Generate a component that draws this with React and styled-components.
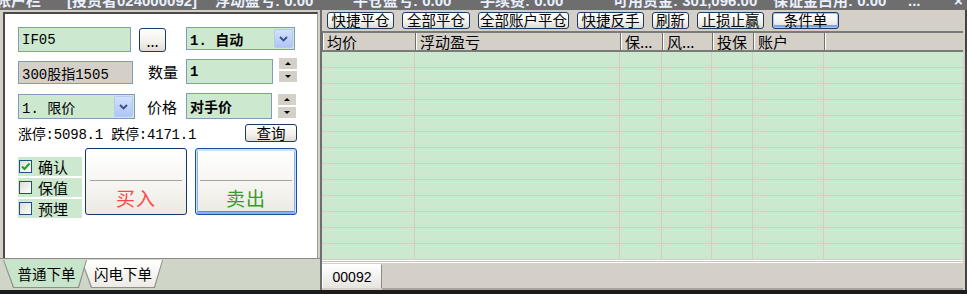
import styled, { createGlobalStyle } from 'styled-components';

const MONO = `"Liberation Mono", "Noto Sans CJK SC", monospace`;

const GlobalStyle = createGlobalStyle`
  html, body { margin: 0; padding: 0; }
  body { background: #d4d0c8; font-family: ${MONO}; }
  * { box-sizing: border-box; }
`;

// 外框
const Window = styled.div`
  width: 967px;
  height: 294px;
  overflow: hidden;
  display: flex;
  flex-direction: column;
  background: #d4d0c8;
`;

// 顶部账户栏（只露出下半截）
const TitleBar = styled.div`
  height: 10px;
  flex: none;
  overflow: hidden;
  display: flex;
  align-items: flex-start;
  background: #6e6e6e;
  color: #e9f0ff;
  font-family: "Liberation Sans", "Noto Sans CJK SC", sans-serif;
  font-weight: bold;
  font-size: 15px;
  line-height: 16px;
  white-space: pre;
`;

const TitleItem = styled.span`
  flex: none;
  margin-top: -7px;
  width: ${(p) => (p.$w ? `${p.$w}px` : 'auto')};
  margin-left: ${(p) => p.$ml || 0}px;
  overflow: hidden;
`;

const Body = styled.div`
  flex: none;
  height: 280px;
  display: flex;
`;

const BottomStrip = styled.div`
  flex: 1;
  background: #1c1c1c;
`;

/* ---------- 左侧下单面板 ---------- */

const LeftPane = styled.div`
  width: 320px;
  flex: none;
  display: flex;
  flex-direction: column;
  padding-top: 2px;
`;

const FormPanel = styled.div`
  margin-left: 3px;
  width: 315px;
  height: 246px;
  background: #fff;
  border-top: 2px solid #4a4a4a;
  border-left: 2px solid #4a4a4a;
  border-right: 1px solid #9a9a9a;
  padding: 13px 0 0 13px;
`;

const Row = styled.div`
  display: flex;
  align-items: flex-start;
  margin-top: ${(p) => p.$mt || 0}px;
`;

const Field = styled.div`
  width: ${(p) => p.$w}px;
  height: ${(p) => p.$h}px;
  margin-top: ${(p) => p.$mt || 0}px;
  margin-left: ${(p) => p.$ml || 0}px;
  flex: none;
  display: flex;
  align-items: center;
  padding-left: 3px;
  background: ${(p) => (p.$gray ? '#d4d0c8' : '#cce8cf')};
  border: 1px solid #7f9db9;
  font-size: 14px;
  font-weight: ${(p) => (p.$bold ? 'bold' : 'normal')};
  color: #000;
  white-space: pre;
  position: relative;
`;

const ArrowBox = styled.span`
  position: absolute;
  right: 1px;
  top: 1px;
  bottom: 1px;
  width: 19px;
  border: 1px solid #b6c9f3;
  border-radius: 2px;
  background: linear-gradient(#d2e0fd, #aec5f6);
  display: flex;
  align-items: center;
  justify-content: center;
`;

const Label = styled.div`
  width: ${(p) => p.$w}px;
  padding-left: ${(p) => p.$pl}px;
  height: ${(p) => p.$h}px;
  flex: none;
  display: flex;
  align-items: center;
  font-size: 15px;
  font-family: "Noto Sans CJK SC", sans-serif;
`;

const XpButton = styled.button`
  flex: none;
  width: ${(p) => p.$w}px;
  height: ${(p) => p.$h}px;
  margin-left: ${(p) => p.$ml || 0}px;
  margin-top: ${(p) => p.$mt || 0}px;
  padding: 0;
  border: 1px solid #1d3b62;
  border-radius: 3px;
  background: linear-gradient(#ffffff, #f3f2ed 55%, #dedcd3);
  box-shadow: ${(p) => (p.$default ? 'inset 0 0 0 1px #a8c6f7, inset 0 -2px 0 1px #7ea4ee' : 'none')};
  font-family: "Noto Sans CJK SC", sans-serif;
  font-size: 14.5px;
  line-height: 1;
  white-space: nowrap;
  color: #000;
  display: flex;
  align-items: ${(p) => (p.$low ? 'flex-end' : 'center')};
  padding-bottom: ${(p) => (p.$low ? 3 : 0)}px;
  justify-content: center;
  cursor: pointer;
`;

const Spinner = styled.div`
  margin-left: 6px;
  margin-top: ${(p) => p.$mt || 0}px;
  width: 18px;
  display: flex;
  flex-direction: column;
  gap: 2px;
`;

const SpinBtn = styled.div`
  height: 11px;
  background: #d4d0c8;
  display: flex;
  align-items: center;
  justify-content: center;

  &::after {
    content: '';
    border-left: 3px solid transparent;
    border-right: 3px solid transparent;
    ${(p) => (p.$down ? 'border-top: 3px solid #000;' : 'border-bottom: 3px solid #000;')}
  }
`;

const LimitText = styled.div`
  width: 227px;
  height: 18px;
  margin-top: 1px;
  display: flex;
  align-items: center;
  font-size: 14px;
  letter-spacing: -0.2px;
  white-space: pre;
`;

const Checks = styled.div`
  width: 64px;
  margin-top: 9px;
  display: flex;
  flex-direction: column;
  gap: 2px;
`;

const CheckRow = styled.div`
  height: 19px;
  background: #cce8cf;
  display: flex;
  align-items: center;
  gap: 6px;
  padding-left: 1px;
  font-family: "Noto Sans CJK SC", sans-serif;
  font-size: 15px;
`;

const Box = styled.span`
  width: 13px;
  height: 13px;
  border: 1px solid #1c5180;
  background: linear-gradient(135deg, #dcdcd6, #ffffff);
  display: flex;
  align-items: center;
  justify-content: center;
`;

const TradeButton = styled.div`
  flex: none;
  width: 102px;
  height: 67px;
  margin-left: ${(p) => p.$ml}px;
  border: 1px solid ${(p) => (p.$focus ? '#1d4f9a' : '#0e3a72')};
  border-radius: 3px;
  background: linear-gradient(#ffffff, #f5f4f0 60%, #ebe9e2);
  box-shadow: ${(p) =>
    p.$focus ? 'inset 0 1px 0 1px #cfe0fc, inset 0 0 0 2px #8db0f3, inset 0 -2px 0 1px #5f8ae8' : 'none'};
  display: flex;
  flex-direction: column;
  padding: 0 4px;
`;

const TradeTop = styled.div`
  height: 32px;
  border-bottom: 1px solid #a3a3a0;
`;

const TradeText = styled.div`
  flex: 1;
  display: flex;
  align-items: center;
  justify-content: center;
  font-family: "Noto Sans CJK SC", sans-serif;
  font-size: 19px;
  letter-spacing: 1px;
  color: ${(p) => p.$color};
`;

const TabStrip = styled.div`
  flex: 1;
  background: #cfd6c7;
  border-top: 1px solid #8a8a8a;
  display: flex;
  align-items: flex-start;
  padding-left: 3px;
`;

const SlantTab = styled.div`
  flex: none;
  width: ${(p) => p.$w}px;
  height: 28px;
  margin-top: 1px;
  margin-left: ${(p) => p.$ml || 0}px;
  position: relative;
  z-index: ${(p) => (p.$active ? 2 : 1)};
  background: #8f8f8f;
  clip-path: polygon(0 0, 100% 0, calc(100% - 8px) 100%, 10px 100%);
  padding: 0 1px 1px 1px;
`;

const SlantFace = styled.div`
  height: 100%;
  background: ${(p) => (p.$active ? '#c6e5ca' : 'linear-gradient(#ffffff, #ecebe4)')};
  clip-path: polygon(0 0, 100% 0, calc(100% - 8px) 100%, 10px 100%);
  display: flex;
  align-items: center;
  justify-content: center;
  padding-left: ${(p) => (p.$active ? 3 : 2)}px;
  font-family: "Noto Sans CJK SC", sans-serif;
  font-size: 14.5px;
  white-space: nowrap;
`;

/* ---------- 右侧持仓列表 ---------- */

const RightPane = styled.div`
  flex: 1;
  display: flex;
  flex-direction: column;
  border-left: 2px solid #6e6e6e;
  border-right: 2px solid #444;
  padding-right: 2px;
`;

const Toolbar = styled.div`
  height: 21px;
  flex: none;
  display: flex;
  gap: 8px;
  padding: 1px 0 0 5px;
`;

const Grid = styled.div`
  flex: none;
  background: #cce8cf;
  border-top: 2px solid #7a7a7a;
`;

const HeaderRow = styled.div`
  display: flex;
  height: 19px;
  background: #d4d0c8;
  border-bottom: 2px solid #7a7a7a;
`;

const HeaderCell = styled.div`
  width: ${(p) => (p.$w ? `${p.$w}px` : 'auto')};
  flex: ${(p) => (p.$w ? 'none' : 1)};
  border-left: ${(p) => (p.$w || p.$edge ? '1px solid #6e6e6e' : 'none')};
  box-shadow: inset 1px 0 0 #ffffff;
  padding-left: 4px;
  font-family: "Noto Sans CJK SC", sans-serif;
  font-size: 15px;
  line-height: 17px;
  white-space: nowrap;
  overflow: hidden;
`;

const DataRow = styled.div`
  display: flex;
  height: 16px;
  border-bottom: 1px solid #d6ccc3;
`;

const DataCell = styled.div`
  width: ${(p) => (p.$w ? `${p.$w}px` : 'auto')};
  flex: ${(p) => (p.$w ? 'none' : 1)};
  border-right: ${(p) => (p.$w ? '1px solid #d6ccc3' : 'none')};
`;

const Groove = styled.div`
  height: 3px;
  flex: none;
  background: linear-gradient(#ffffff 0 1px, #c9c5bd 1px 2px, #ffffff 2px 3px);
`;

const BottomTabs = styled.div`
  flex: 1;
  display: flex;
  align-items: flex-start;
`;

const PageTab = styled.div`
  flex: none;
  width: 60px;
  height: 24px;
  margin-top: 1px;
  border-left: 1px solid #ffffff;
  border-top: 1px solid #ffffff;
  border-right: 1px solid #8c8a84;
  background: linear-gradient(#ffffff, #e6e4de);
  display: flex;
  align-items: center;
  justify-content: center;
  padding-top: 1px;
  font-family: "Liberation Sans", sans-serif;
  font-size: 14px;
`;

const TabFill = styled.div`
  flex: 1;
  height: 27px;
  border-bottom: 2px solid #a8a49c;
`;

const columns = [
  { title: '均价', w: 93 },
  { title: '浮动盈亏', w: 205 },
  { title: '保...', w: 42 },
  { title: '风...', w: 50 },
  { title: '投保', w: 41 },
  { title: '账户', w: 71 },
  { title: '' },
];

const toolButtons = [
  { text: '快捷平仓', w: 67 },
  { text: '全部平仓', w: 68 },
  { text: '全部账户平仓', w: 91 },
  { text: '快捷反手', w: 67 },
  { text: '刷新', w: 37 },
  { text: '止损止赢', w: 67 },
  { text: '条件单', w: 67, def: true },
];

const Chevron = () => (
  <svg width="9" height="6" viewBox="0 0 9 6">
    <path d="M1 1 L4.5 4.5 L8 1" fill="none" stroke="#3b4f82" strokeWidth="1.8" />
  </svg>
);

const Tick = () => (
  <svg width="11" height="11" viewBox="0 0 11 11">
    <path d="M2 5.5 L4.5 8 L9.5 2.5" fill="none" stroke="#21a121" strokeWidth="2" />
  </svg>
);

function App() {
  return (
    <Window>
      <GlobalStyle />
      <TitleBar>
        <TitleItem $ml={-4} $w={71}>帐户栏</TitleItem>
        <TitleItem $w={148}>[投资者024000092]</TitleItem>
        <TitleItem $w={138}>浮动盈亏: 0.00</TitleItem>
        <TitleItem $w={127}>平仓盈亏: 0.00</TitleItem>
        <TitleItem $w={133}>手续费: 0.00</TitleItem>
        <TitleItem $w={160}>可用资金: 301,096.00</TitleItem>
        <TitleItem $w={135}>保证金占用: 0.00</TitleItem>
        <TitleItem $w={46}>...</TitleItem>
        <TitleItem>×</TitleItem>
      </TitleBar>

      <Body>
        <LeftPane>
          <FormPanel>
            <Row>
              <Field $w={113} $h={25}>IF05</Field>
              <XpButton $w={27} $h={24} $ml={8} $mt={1} $low>...</XpButton>
              <Field $w={109} $h={23} $ml={20} $bold>
                1. 自动
                <ArrowBox><Chevron /></ArrowBox>
              </Field>
            </Row>
            <Row $mt={6}>
              <Field $w={115} $h={23} $mt={3} $gray>300股指1505</Field>
              <Label $w={53} $pl={15} $h={27}>数量</Label>
              <Field $w={87} $h={25} $mt={1} $bold>1</Field>
              <Spinner>
                <SpinBtn />
                <SpinBtn $down />
              </Spinner>
            </Row>
            <Row $mt={8}>
              <Field $w={117} $h={25} $mt={1}>
                1. 限价
                <ArrowBox><Chevron /></ArrowBox>
              </Field>
              <Label $w={51} $pl={12} $h={27}>价格</Label>
              <Field $w={86} $h={26} $bold>对手价</Field>
              <Spinner $mt={1}>
                <SpinBtn />
                <SpinBtn $down />
              </Spinner>
            </Row>
            <Row $mt={3}>
              <LimitText>涨停:5098.1 跌停:4171.1</LimitText>
              <XpButton $w={52} $h={18} $mt={1}>查询</XpButton>
            </Row>
            <Row $mt={6}>
              <Checks>
                <CheckRow><Box><Tick /></Box>确认</CheckRow>
                <CheckRow><Box />保值</CheckRow>
                <CheckRow><Box />预埋</CheckRow>
              </Checks>
              <TradeButton $ml={3}>
                <TradeTop />
                <TradeText $color="#ff4646">买入</TradeText>
              </TradeButton>
              <TradeButton $ml={8} $focus>
                <TradeTop />
                <TradeText $color="#3a9a2c">卖出</TradeText>
              </TradeButton>
            </Row>
          </FormPanel>
          <TabStrip>
            <SlantTab $w={84} $active>
              <SlantFace $active>普通下单</SlantFace>
            </SlantTab>
            <SlantTab $w={82} $ml={-6}>
              <SlantFace>闪电下单</SlantFace>
            </SlantTab>
          </TabStrip>
        </LeftPane>

        <RightPane>
          <Toolbar>
            {toolButtons.map((b) => (
              <XpButton key={b.text} $w={b.w} $h={17} $mt={1} $default={b.def}>
                {b.text}
              </XpButton>
            ))}
          </Toolbar>
          <Grid>
            <HeaderRow>
              {columns.map((c, i) => (
                <HeaderCell key={i} $w={c.w} $edge={!c.w}>{c.title}</HeaderCell>
              ))}
            </HeaderRow>
            {Array.from({ length: 13 }).map((_, r) => (
              <DataRow key={r}>
                {columns.map((c, i) => (
                  <DataCell key={i} $w={c.w} />
                ))}
              </DataRow>
            ))}
          </Grid>
          <Groove />
          <BottomTabs>
            <PageTab>00092</PageTab>
            <TabFill />
          </BottomTabs>
        </RightPane>
      </Body>
      <BottomStrip />
    </Window>
  );
}

export default App;
